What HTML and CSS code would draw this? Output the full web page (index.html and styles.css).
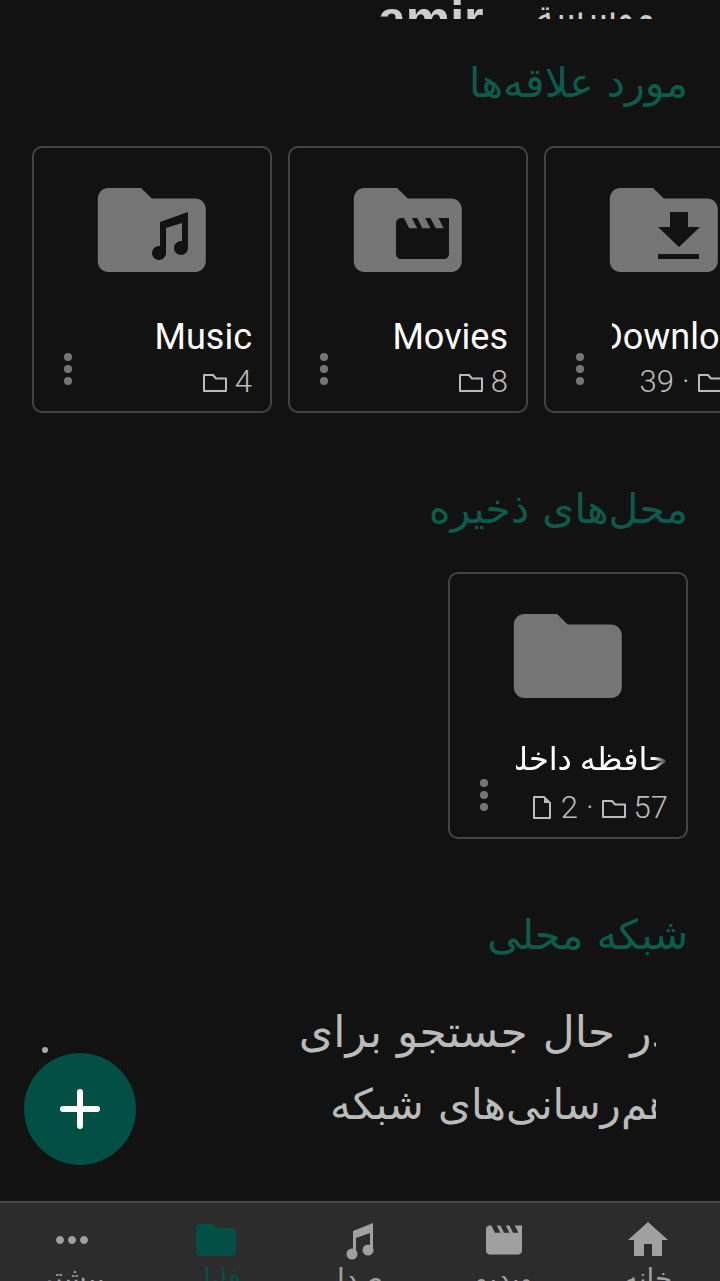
FILE: index.html
```html
<!DOCTYPE html>
<html lang="fa" dir="rtl">
<head>
  <meta charset="UTF-8">
  <meta name="viewport" content="width=device-width, initial-scale=1.0">
  <title>فایل‌ها</title>
  <link rel="stylesheet" href="styles.css">
</head>
<body>
  <main class="content">
    <div class="top-strip">
      <span class="top-name">موسسة</span>
      <span class="top-name top-bold">amir</span>
    </div>

    <!-- مورد علاقه‌ها -->
    <h2 class="section-title">مورد علاقه‌ها</h2>
    <div class="card-row" dir="ltr">
      <div class="card">
        <svg class="folder" viewBox="0 0 130 130">
          <path transform="scale(5.4 5.25)" d="M10 4H4c-1.1 0-2 .9-2 2v12c0 1.1.9 2 2 2h16c1.1 0 2-.9 2-2V8c0-1.1-.9-2-2-2h-8l-2-2z"/>
          <g class="cut" transform="translate(0 -1)">
            <path d="M73 56 L101 46 V82 H95 V57 L79 62 V88 H73 Z"/>
            <circle cx="72" cy="87" r="7"/>
            <circle cx="94" cy="82" r="7"/>
          </g>
        </svg>
        <div class="card-foot">
          <div class="menu"><i></i><i></i><i></i></div>
          <div class="card-text">
            <div class="name">Music</div>
            <div class="meta">
              <svg class="ic-folder" viewBox="0 0 24 18"><path d="M1 17V1h9l3 3.500h10V17z"/></svg>
              <span>4</span>
            </div>
          </div>
        </div>
      </div>
      <div class="card">
        <svg class="folder" viewBox="0 0 130 130">
          <path transform="scale(5.4 5.25)" d="M10 4H4c-1.1 0-2 .9-2 2v12c0 1.1.9 2 2 2h16c1.1 0 2-.9 2-2V8c0-1.1-.9-2-2-2h-8l-2-2z"/>
          <path class="cut" transform="translate(47.700 40.700) scale(2.650 2.570)" d="M18 4l2 4h-3l-2-4h-2l2 4h-3l-2-4H8l2 4H7L5 4H4c-1.1 0-1.99.9-1.99 2L2 18c0 1.1.9 2 2 2h16c1.1 0 2-.9 2-2V4h-4z"/>
        </svg>
        <div class="card-foot">
          <div class="menu"><i></i><i></i><i></i></div>
          <div class="card-text">
            <div class="name">Movies</div>
            <div class="meta">
              <svg class="ic-folder" viewBox="0 0 24 18"><path d="M1 17V1h9l3 3.500h10V17z"/></svg>
              <span>8</span>
            </div>
          </div>
        </div>
      </div>
      <div class="card">
        <svg class="folder" viewBox="0 0 130 130">
          <path transform="scale(5.4 5.25)" d="M10 4H4c-1.1 0-2 .9-2 2v12c0 1.1.9 2 2 2h16c1.1 0 2-.9 2-2V8c0-1.1-.9-2-2-2h-8l-2-2z"/>
          <path class="cut" transform="translate(0 -1)" d="M71 46h18v15h12L80 81 59 61h12zM59 88h41v5H59z"/>
        </svg>
        <div class="card-foot">
          <div class="menu"><i></i><i></i><i></i></div>
          <div class="card-text">
            <div class="name name-scrolled">Downloads</div>
            <div class="meta">
              <span>39</span><span class="sep">·</span>
              <svg class="ic-folder" viewBox="0 0 24 18"><path d="M1 17V1h9l3 3.500h10V17z"/></svg>
              <span>12</span>
            </div>
          </div>
        </div>
      </div>
    </div>

    <!-- محل‌های ذخیره -->
    <h2 class="section-title">محل‌های ذخیره</h2>
    <div class="card-row storage-row" dir="ltr">
      <div class="card">
        <svg class="folder" viewBox="0 0 130 130">
          <path transform="scale(5.4 5.25)" d="M10 4H4c-1.1 0-2 .9-2 2v12c0 1.1.9 2 2 2h16c1.1 0 2-.9 2-2V8c0-1.1-.9-2-2-2h-8l-2-2z"/>
        </svg>
        <div class="card-foot">
          <div class="menu"><i></i><i></i><i></i></div>
          <div class="card-text">
            <div class="name name-fade">حافظه داخلی</div>
            <div class="meta">
              <svg class="ic-file" viewBox="0 0 18 23"><path class="file-line" d="M1 22V1h10l6 6v15z"/><path class="file-fill" d="M11 1l6 6h-6z"/></svg>
              <span>2</span><span class="sep">·</span>
              <svg class="ic-folder" viewBox="0 0 24 18"><path d="M1 17V1h9l3 3.500h10V17z"/></svg>
              <span>57</span>
            </div>
          </div>
        </div>
      </div>
    </div>

    <!-- شبکه محلی -->
    <h2 class="section-title">شبکه محلی</h2>
    <div class="scan-box">
      <p class="scan-text">در حال جستجو برای<br><span class="scan-second">هم‌رسانی‌های شبکه</span></p>
    </div>
  </main>

  <span class="stray-dot"></span>
  <button class="fab">
    <svg viewBox="0 0 40 40"><path d="M20 3v34M3 20h34"/></svg>
  </button>

  <nav class="bottom-nav" dir="rtl">
    <div class="nav-item">
      <svg viewBox="0 0 24 24"><path d="M10 20v-6h4v6h5v-8h3L12 3 2 12h3v8z"/></svg>
      <span>خانه</span>
    </div>
    <div class="nav-item">
      <svg class="nav-movie" viewBox="0 0 24 24"><path d="M18 4l2 4h-3l-2-4h-2l2 4h-3l-2-4H8l2 4H7L5 4H4c-1.1 0-1.99.9-1.99 2L2 18c0 1.1.9 2 2 2h16c1.1 0 2-.9 2-2V4h-4z"/></svg>
      <span>ویدیو</span>
    </div>
    <div class="nav-item">
      <svg viewBox="0 0 48 48"><path d="M17 15L37 7V34H34V17L20 22V38H17Z"/><circle cx="16" cy="38" r="5.500"/><circle cx="32" cy="34" r="5.500"/></svg>
      <span>صدا</span>
    </div>
    <div class="nav-item active">
      <svg viewBox="0 0 24 24"><path d="M10 4H4c-1.1 0-2 .9-2 2v12c0 1.1.9 2 2 2h16c1.1 0 2-.9 2-2V8c0-1.1-.9-2-2-2h-8l-2-2z"/></svg>
      <span>فایل</span>
    </div>
    <div class="nav-item">
      <svg viewBox="0 0 24 24"><path d="M6 10c-1.1 0-2 .9-2 2s.9 2 2 2 2-.9 2-2-.9-2-2-2zm12 0c-1.1 0-2 .9-2 2s.9 2 2 2 2-.9 2-2-.9-2-2-2zm-6 0c-1.1 0-2 .9-2 2s.9 2 2 2 2-.9 2-2-.9-2-2-2z"/></svg>
      <span>بیشتر</span>
    </div>
  </nav>
</body>
</html>
```

FILE: styles.css
```css
:root {
  --bg: #121212;
  --accent: #0a5c4d;
  --fab: #025045;
  --icon: #757575;
  --line: #444444;
  --muted: #bbbbbb;
}
html, body {
  margin: 0;
  height: 1281px;
  overflow: hidden;
}
body {
  position: relative;
  display: flex;
  flex-direction: column;
  background: var(--bg);
  color: #fff;
  font-family: Roboto, "DejaVu Sans", sans-serif;
}
.content {
  flex: 1;
  min-height: 0;
  overflow: hidden;
}

/* تکه بالای صفحه که بریده شده */
.top-strip {
  display: flex;
  gap: 52px;
  height: 19px;
  padding-right: 65px;
  overflow: hidden;
  margin-bottom: 40px;
}
.top-name {
  font-size: 36px;
  line-height: 28px;
  color: #cccccc;
  font-family: "Liberation Sans", "DejaVu Sans", sans-serif;
}
.top-bold {
  font-size: 50px;
  line-height: 38px;
  font-weight: 700;
}

.section-title {
  margin: 0 32px 39px;
  font-size: 41px;
  line-height: 48px;
  font-weight: 400;
  word-spacing: 3px;
  color: var(--accent);
}

.card-row {
  display: flex;
  gap: 16px;
  padding-left: 32px;
  margin-bottom: 72px;
  overflow: hidden;
}
.storage-row {
  padding-left: 448px;
}
.card {
  flex: none;
  box-sizing: border-box;
  display: flex;
  flex-direction: column;
  align-items: center;
  width: 240px;
  height: 267px;
  padding-top: 19px;
  border: 2px solid var(--line);
  border-radius: 10px;
}
.folder {
  width: 130px;
  height: 130px;
  fill: var(--icon);
}
.folder .cut {
  fill: var(--bg);
}
.card-foot {
  box-sizing: border-box;
  display: flex;
  gap: 8px;
  width: 100%;
  margin-top: 18px;
  padding: 0 18px 0 10px;
}
.menu {
  flex: none;
  box-sizing: border-box;
  display: flex;
  flex-direction: column;
  align-items: center;
  justify-content: flex-end;
  gap: 4px;
  width: 48px;
  padding-bottom: 14px;
}
.menu i {
  width: 8px;
  height: 8px;
  border-radius: 50%;
  background: var(--icon);
}
.card-text {
  flex: 1;
  min-width: 0;
  overflow: hidden;
}
.name {
  direction: rtl;
  font-size: 36px;
  line-height: 44px;
  white-space: nowrap;
  margin-bottom: 4px;
}
.name-scrolled {
  margin-right: -14px;
}
.name-fade {
  font-size: 32px;
  line-height: 36px;
  margin-bottom: 12px;
  -webkit-mask-image: linear-gradient(to left, transparent 0, #000 14px);
  mask-image: linear-gradient(to left, transparent 0, #000 14px);
}
.meta {
  display: flex;
  justify-content: flex-end;
  align-items: center;
  gap: 8px;
  height: 36px;
  font-size: 31px;
  font-weight: 300;
  color: var(--muted);
  white-space: nowrap;
}
.ic-folder {
  flex: none;
  width: 24px;
  height: 18px;
  margin-top: 4px;
  fill: none;
  stroke: var(--muted);
  stroke-width: 2;
  stroke-linejoin: round;
}
.ic-file {
  flex: none;
  width: 18px;
  height: 23px;
  margin-right: 2px;
}
.file-line {
  fill: none;
  stroke: var(--muted);
  stroke-width: 2;
  stroke-linejoin: round;
}
.file-fill {
  fill: var(--muted);
}

.scan-box {
  margin-right: 64px;
  overflow: hidden;
}
.scan-text {
  margin: -2px -15px 0 0;
  font-size: 44px;
  line-height: 72px;
  word-spacing: 4px;
  text-align: right;
  color: var(--muted);
}
.scan-second {
  font-size: 42px;
}

.stray-dot {
  position: absolute;
  left: 42px;
  top: 1047px;
  width: 6px;
  height: 6px;
  border-radius: 50%;
  background: #aaaaaa;
}
.fab {
  position: absolute;
  left: 24px;
  top: 1053px;
  display: flex;
  align-items: center;
  justify-content: center;
  width: 112px;
  height: 112px;
  padding: 0;
  border: none;
  border-radius: 50%;
  background: var(--fab);
}
.fab svg {
  width: 40px;
  height: 40px;
  fill: none;
  stroke: #fff;
  stroke-width: 6;
  stroke-linecap: round;
}

.bottom-nav {
  flex: none;
  box-sizing: border-box;
  display: grid;
  grid-template-columns: repeat(5, 1fr);
  height: 80px;
  padding-top: 13px;
  overflow: hidden;
  background: #2c2c2c;
  border-top: 2px solid #484848;
}
.nav-item {
  display: flex;
  flex-direction: column;
  align-items: center;
  color: #a0a0a0;
  fill: #a0a0a0;
}
.nav-item svg {
  flex: none;
  width: 48px;
  height: 48px;
}
.nav-item .nav-movie {
  transform: scale(0.9);
}
.nav-item span {
  font-size: 28px;
  line-height: 30px;
  white-space: nowrap;
}
.nav-item.active {
  color: var(--fab);
  fill: var(--fab);
}
```
